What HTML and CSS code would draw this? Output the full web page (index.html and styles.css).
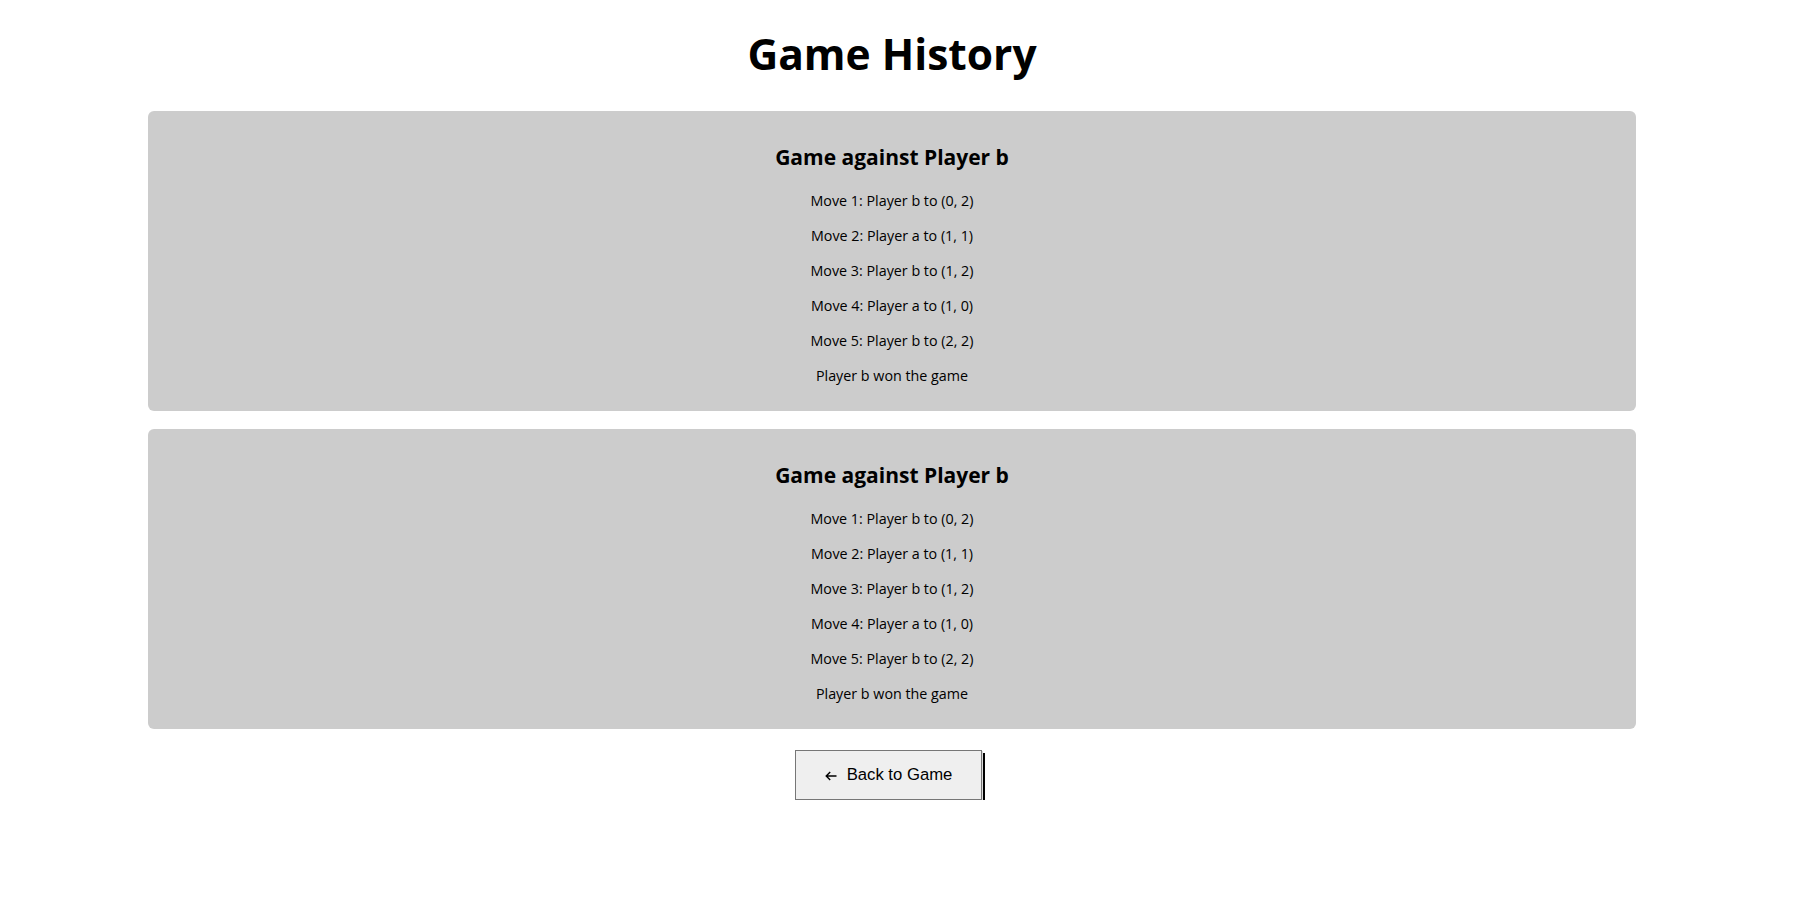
FILE: index.html
```html
<!DOCTYPE html>
<html>
<head>
<meta charset="utf-8">
<link rel="stylesheet" href="styles.css">
</head>
<body>
<div class="page">
  <h1 class="title">Game History</h1>
  <div class="card">
    <h2 class="card-title">Game against Player b</h2>
    <p class="move">Move 1: Player b to (0, 2)</p>
    <p class="move">Move 2: Player a to (1, 1)</p>
    <p class="move">Move 3: Player b to (1, 2)</p>
    <p class="move">Move 4: Player a to (1, 0)</p>
    <p class="move">Move 5: Player b to (2, 2)</p>
    <p class="move">Player b won the game</p>
  </div>
  <div class="card">
    <h2 class="card-title">Game against Player b</h2>
    <p class="move">Move 1: Player b to (0, 2)</p>
    <p class="move">Move 2: Player a to (1, 1)</p>
    <p class="move">Move 3: Player b to (1, 2)</p>
    <p class="move">Move 4: Player a to (1, 0)</p>
    <p class="move">Move 5: Player b to (2, 2)</p>
    <p class="move">Player b won the game</p>
  </div>
  <div class="actions">
    <button class="back-btn"><svg class="arrow" width="12" height="10" viewBox="0 0 12 10"><path d="M11.5 5H1.2M5.2 1L1.2 5L5.2 9" fill="none" stroke="#000" stroke-width="1.4"/></svg><span>Back to Game</span></button>
  </div>
</div>
</body>
</html>
```
FILE: styles.css
```css
body { margin: 0; background: #fff; font-family: "Open Sans", sans-serif; color: #000; }
.page { width: 1488px; margin-left: 148px; }
.title { margin: 0; padding-top: 24px; height: 91px; box-sizing: border-box; text-align: center; font-size: 42.5px; font-weight: 700; line-height: 60px; }
.card { background: #ccc; border-radius: 6px; display: flex; flex-direction: column; align-items: center; gap: 15px; padding: 31px 0 25px; margin-top: 20px; box-sizing: border-box; height: 300px; }
.card + .card { margin-top: 18px; }
.card-title { margin: 0 0 4px; font-size: 21px; line-height: 30px; font-weight: 700; }
.move { margin: 0; font-size: 14.3px; line-height: 20px; }
.actions { display: flex; justify-content: center; margin-top: 21px; }
.back-btn { display: flex; align-items: center; justify-content: center; gap: 10px; font-family: "Liberation Sans", Arial, sans-serif; font-size: 16.7px; color: #000; background: #efefef; border: 1px solid #767676; box-shadow: 1px 1px 0 #dcdcdc, 3px 3px 0 #000; width: 187px; height: 50px; margin-right: 7px; padding: 0; }
.arrow { display: block; flex: none; margin-top: 2px; }
```
